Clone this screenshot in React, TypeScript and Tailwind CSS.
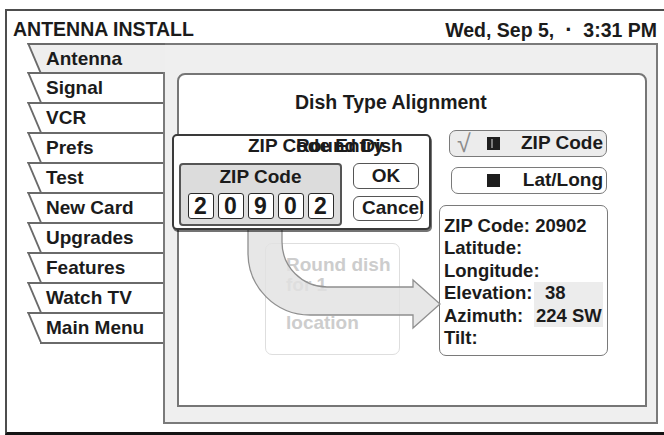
import React from "react";

const FONT = "font-['Liberation_Sans',Arial,Helvetica,sans-serif]";

const tabs = ["Signal", "VCR", "Prefs", "Test", "New Card", "Upgrades", "Features", "Watch TV", "Main Menu"];

function Tab({ label, active }: { label: string; active?: boolean }) {
  return (
    <div
      className={
        active
          ? "relative z-10 h-[29px] w-[158px] overflow-hidden"
          : "relative h-[30px] w-[156px] overflow-hidden"
      }
    >
      <div
        className={
          active
            ? "absolute top-0 bottom-[-4px] left-[20px] right-[-30px] origin-top-left skew-x-[23deg] border-l-2 border-t-2 border-[#6a6a6a] bg-[#eeeeee]"
            : "absolute top-0 bottom-[-4px] left-[20px] right-[-30px] origin-top-left skew-x-[23deg] border-l-2 border-t-2 border-[#6a6a6a] bg-white"
        }
      />
      <span className="relative block pl-[39px] pt-[1px] text-[19px] font-bold leading-[29px] text-[#1b1b1b]">
        {label}
      </span>
    </div>
  );
}

function Digit({ d }: { d: string }) {
  return (
    <div className="flex h-[26px] w-[26px] items-center justify-center rounded-[3px] border-[1.5px] border-[#2a2a2a] bg-white text-[23px] font-bold leading-none text-[#1b1b1b]">
      {d}
    </div>
  );
}

export default function App() {
  return (
    <div className={`h-[435px] w-[664px] overflow-hidden bg-white pl-[5px] pt-[9px] text-[#1b1b1b] ${FONT}`}>
      <div className="flex h-[426px] flex-col border-l-2 border-t-2 border-b-[3px] border-[#4d4d4d] border-b-[#141414]">
        {/* title bar */}
        <div className="flex h-[32px] items-start justify-between pl-[6px] pr-[7px] pt-[8px] text-[19.5px] font-bold leading-[21px]">
          <span>ANTENNA INSTALL</span>
          <span className="whitespace-pre">
            Wed, Sep 5,  <span className="text-[22px] leading-[21px]">·</span>  3:31 PM
          </span>
        </div>

        <div className="flex flex-1">
          {/* menu tabs */}
          <div className="flex w-[156px] flex-col">
            <Tab label="Antenna" active />
            {tabs.map((t) => (
              <Tab key={t} label={t} />
            ))}
            <div className="ml-[33px] border-t-2 border-[#6a6a6a]" />
          </div>

          {/* tab page */}
          <div className="mb-[8px] flex w-[495px] border-2 border-[#7a7a7a] bg-[#efefef] pb-[15px] pl-[12px] pr-[9px] pt-[28px]">
            <div className="relative flex-1 rounded-t-[8px] border-2 border-[#767676] bg-white">
              <div className="mt-[17px] pl-[116px] text-[19.5px] font-bold leading-[21px]">Dish Type Alignment</div>

              <div className="mt-[17px] flex">
                {/* dish picture card */}
                <div className="w-[260px]">
                  <div className="ml-[86px] mt-[113px] h-[112px] w-[135px] rounded-[7px] border-[1.5px] border-[#dedede] pl-[20px] pt-[10px] text-[19px] font-bold leading-[19px] text-[#cdcdcd]">
                    <div className="leading-[21px]">Round dish</div>
                    <div>for 1</div>
                    <div className="mt-[19px]">location</div>
                  </div>
                </div>

                {/* location method + results */}
                <div className="w-[169px]">
                  <div className="ml-[10px] flex h-[27px] w-[158px] items-center rounded-[7px] border-[1.5px] border-[#7a7a7a] bg-[#ececec] pl-[7px] pr-[3px] text-[19px] font-bold">
                    <span className="w-[30px] text-[25px] font-normal leading-none text-[#8c8c8c]">√</span>
                    <span className="relative h-[13px] w-[13px] bg-[#1e1e1e]">
                      <span className="absolute bottom-[2px] left-[4px] top-[2px] w-[2px] bg-[#7c7c7c]" />
                    </span>
                    <span className="ml-auto">ZIP Code</span>
                  </div>
                  <div className="ml-[12px] mt-[10px] flex h-[27px] w-[156px] items-center rounded-[7px] border-[1.5px] border-[#7a7a7a] bg-white pl-[35px] pr-[3px] text-[19px] font-bold">
                    <span className="h-[13px] w-[13px] bg-[#1e1e1e]" />
                    <span className="ml-auto">Lat/Long</span>
                  </div>
                  <div className="mt-[11px] h-[151px] w-[169px] rounded-[7px] border-[1.5px] border-[#7a7a7a] bg-white pl-[4px] pt-[9px] text-[18.5px] font-bold leading-[22.4px]">
                    <div>ZIP Code: 20902</div>
                    <div>Latitude:</div>
                    <div>Longitude:</div>
                    <div className="flex">
                      <span className="w-[90px]">Elevation:</span>
                      <span className="w-[69px] bg-[#ececec] pl-[11px]">38</span>
                    </div>
                    <div className="flex">
                      <span className="w-[90px]">Azimuth:</span>
                      <span className="w-[69px] bg-[#ececec] pl-[2px]">224 SW</span>
                    </div>
                    <div>Tilt:</div>
                  </div>
                </div>
              </div>

              {/* curved pointer from entry dialog to results */}
              <svg
                className="pointer-events-none absolute left-0 top-0"
                width="466"
                height="330"
                viewBox="0 0 466 330"
              >
                <path
                  d="M69,145 L69,178 A62,62 0 0 0 131,240 L234,240 L234,253 L261,229 L234,205 L234,212 L148,212 A45,45 0 0 1 103,167 L103,145 Z"
                  fill="#e2e2e2"
                  fillOpacity="0.82"
                  stroke="#8f8f8f"
                  strokeWidth="1.3"
                />
              </svg>

              {/* ZIP code entry dialog */}
              <div className="absolute left-[-7px] top-[59px] h-[96px] w-[259px] rounded-[5px] border-2 border-[#3a3a3a] bg-white shadow-[1px_2px_0_rgba(0,0,0,0.55)]">
                <div className="relative h-[27px] text-[19px] font-bold leading-[19px]">
                  <span className="absolute left-[74px] top-0 whitespace-nowrap">ZIP Code Entry</span>
                  <span className="absolute left-[122px] top-0 whitespace-nowrap">Round Dish</span>
                </div>
                <div className="flex">
                  <div className="ml-[5px] flex h-[63px] w-[163px] flex-col items-center rounded-[4px] border-2 border-[#555] bg-[#dcdcdc] pt-[1px]">
                    <div className="text-[19px] font-bold leading-[21px]">ZIP Code</div>
                    <div className="mt-[6px] flex gap-[4px]">
                      <Digit d="2" />
                      <Digit d="0" />
                      <Digit d="9" />
                      <Digit d="0" />
                      <Digit d="2" />
                    </div>
                  </div>
                  <div className="ml-[11px] flex flex-col">
                    <div className="flex h-[26px] w-[66px] items-center justify-center rounded-[6px] border-[1.5px] border-[#555] bg-white text-[19px] font-bold">
                      OK
                    </div>
                    <div className="mt-[7px] flex h-[25px] w-[69px] items-center rounded-[6px] border-[1.5px] border-[#555] bg-white pl-[8px] text-[19px] font-bold whitespace-nowrap">
                      Cancel
                    </div>
                  </div>
                </div>
              </div>
            </div>
          </div>
        </div>
      </div>
    </div>
  );
}
